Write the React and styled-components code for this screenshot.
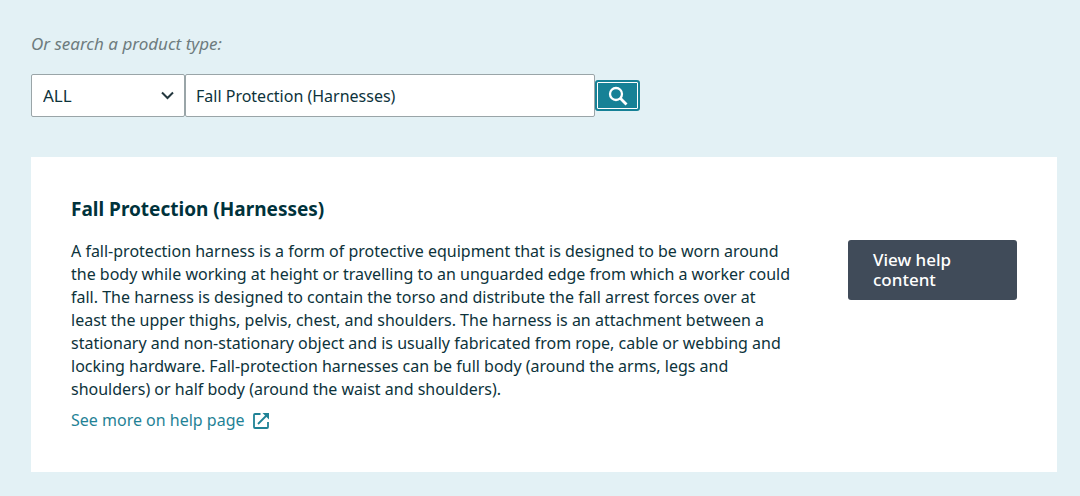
import React, { useState } from 'react'
import styled, { createGlobalStyle } from 'styled-components'

const GlobalStyle = createGlobalStyle`
  * {
    box-sizing: border-box;
  }

  body {
    margin: 0;
    min-height: 100vh;
    background-color: #e3f1f5;
    color: #0d333b;
    font-family: "Noto Sans", "Open Sans", sans-serif;
    font-size: 16px;
    line-height: 23px;
  }

  button,
  input,
  select {
    font: inherit;
    color: inherit;
  }
`

const StyledPage = styled.main`
  padding: 32px 23px 24px 31px;
`

const StyledPrompt = styled.label`
  display: block;
  color: #6e7c7e;
  font-size: 17px;
  font-style: italic;
`

const StyledSearchForm = styled.form`
  display: flex;
  align-items: center;
  margin: 19px 0 40px;
`

const StyledSelectWrapper = styled.div`
  display: grid;
  align-items: center;
  flex: 0 1 154px;

  > * {
    grid-area: 1 / 1;
  }
`

const StyledSelect = styled.select`
  appearance: none;
  width: 100%;
  height: 43px;
  padding: 0 32px 0 11px;
  border: 1px solid #9aa5a8;
  border-radius: 2px;
  background-color: white;
  font-size: 17px;
`

const StyledChevron = styled.svg`
  justify-self: end;
  margin-right: 11px;
  pointer-events: none;
`

const StyledInput = styled.input`
  flex: 0 1 410px;
  min-width: 0;
  height: 43px;
  padding: 0 10px;
  border: 1px solid #9aa5a8;
  border-radius: 2px;
  background-color: white;
`

const StyledSearchButton = styled.button`
  display: flex;
  align-items: center;
  justify-content: center;
  width: 45px;
  height: 31px;
  padding: 0;
  border: 2px solid #168196;
  border-radius: 3px;
  background-color: #168196;
  box-shadow: inset 0 0 0 1px white;
  color: white;
  cursor: pointer;
`

const StyledCard = styled.section`
  display: grid;
  grid-template-columns: minmax(0, 1fr) 169px;
  gap: 56px;
  padding: 40px;
  background-color: white;
`

const StyledTitle = styled.h2`
  margin: 0 0 19px;
  color: #00323b;
  font-size: 19px;
  line-height: 24px;
  font-weight: 700;
`

const StyledDescription = styled.p`
  margin: 0 0 8px;
`

const StyledLink = styled.a`
  display: flex;
  align-items: center;
  gap: 8px;
  width: fit-content;
  color: #1f8296;
  text-decoration: none;
`

const StyledHelpButton = styled.button`
  align-self: start;
  margin-top: 43px;
  padding: 10px 25px;
  border: none;
  border-radius: 3px;
  background-color: #404b59;
  color: white;
  font-size: 17px;
  font-weight: 500;
  line-height: 20px;
  text-align: left;
  cursor: pointer;
`

const ChevronIcon = () => (
  <StyledChevron width="13" height="9" viewBox="0 0 13 9" fill="none" aria-hidden="true">
    <path d="M1 1.5L6.5 7L12 1.5" stroke="#24383f" strokeWidth="2" />
  </StyledChevron>
)

const SearchIcon = () => (
  <svg width="20" height="20" viewBox="0 0 20 20" fill="none" stroke="currentColor" aria-hidden="true">
    <circle cx="8" cy="8" r="6" strokeWidth="2.3" />
    <path d="M12.3 12.3L18.5 18.5" strokeWidth="2.8" />
  </svg>
)

const ExternalIcon = () => (
  <svg width="16" height="16" viewBox="0 0 16 16" fill="none" stroke="currentColor" strokeWidth="1.8" aria-hidden="true">
    <path d="M7.5 1H2Q1 1 1 2V14Q1 15 2 15H14Q15 15 15 14V9" />
    <path d="M14 2L5 11" />
    <path d="M9.5 0H16V6.5Z" fill="currentColor" stroke="none" />
  </svg>
)

const SearchBar = () => {
  const [category, setCategory] = useState('all')
  const [query, setQuery] = useState('Fall Protection (Harnesses)')

  return (
    <>
      <StyledPrompt htmlFor="product-type">Or search a product type:</StyledPrompt>
      <StyledSearchForm onSubmit={(event) => event.preventDefault()}>
        <StyledSelectWrapper>
          <StyledSelect
            aria-label="Category"
            value={category}
            onChange={(event) => setCategory(event.target.value)}>
            <option value="all">ALL</option>
          </StyledSelect>
          <ChevronIcon />
        </StyledSelectWrapper>
        <StyledInput
          id="product-type"
          type="text"
          value={query}
          onChange={(event) => setQuery(event.target.value)} />
        <StyledSearchButton type="submit" aria-label="Search">
          <SearchIcon />
        </StyledSearchButton>
      </StyledSearchForm>
    </>
  )
}

const ProductCard = () => (
  <StyledCard>
    <div>
      <StyledTitle>Fall Protection (Harnesses)</StyledTitle>
      <StyledDescription>
        A fall-protection harness is a form of protective equipment that is designed to be worn
        around the body while working at height or travelling to an unguarded edge from which a
        worker could fall. The harness is designed to contain the torso and distribute the fall
        arrest forces over at least the upper thighs, pelvis, chest, and shoulders. The harness is
        an attachment between a stationary and non-stationary object and is usually fabricated from
        rope, cable or webbing and locking hardware. Fall-protection harnesses can be full body
        (around the arms, legs and shoulders) or half body (around the waist and shoulders).
      </StyledDescription>
      <StyledLink href="#help">
        See more on help page
        <ExternalIcon />
      </StyledLink>
    </div>
    <StyledHelpButton type="button">View help content</StyledHelpButton>
  </StyledCard>
)

export default function App() {
  return (
    <StyledPage>
      <GlobalStyle />
      <SearchBar />
      <ProductCard />
    </StyledPage>
  )
}
